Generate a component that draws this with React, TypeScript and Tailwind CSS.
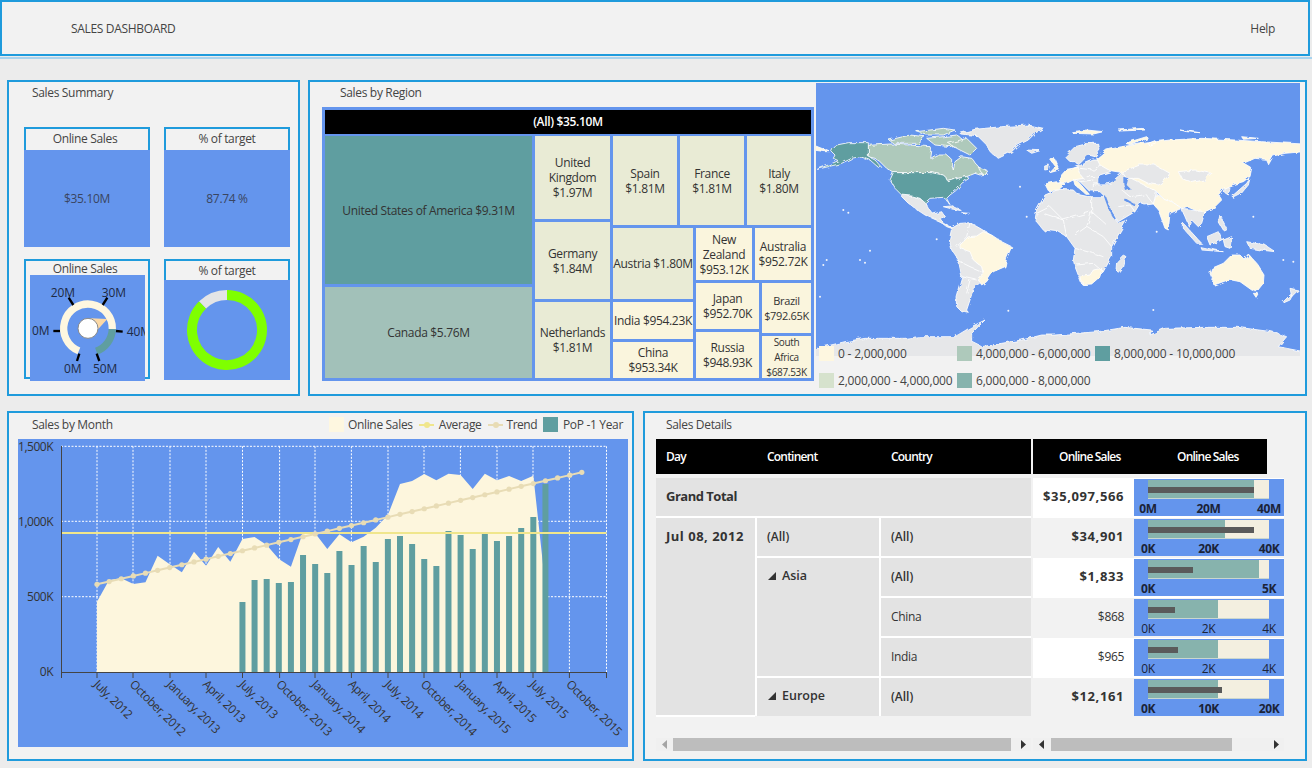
const BLUE = '#6495ed';
const TEAL = '#5f9ea0';
const CREAM = '#fef7e0';
const LAND = '#e6e7e9';

const areaTops = [590, 525, 520, 537, 532, 452, 478, 502, 440, 482, 426, 470, 402, 396, 420, 462, 485, 382, 385, 432, 388, 412, 395, 368, 330, 237, 228, 207, 226, 206, 210, 252, 206, 226, 213, 228, 212, 545];
const barTops = [591, 525, 522, 534, 531, 450, 477, 504, 438, 480, 423, 471, 402, 393, 417, 462, 483, 378, 390, 432, 387, 408, 393, 369, 336, 237];
const monthLabels = ['July, 2012', 'October, 2012', 'January, 2013', 'April, 2013', 'July, 2013', 'October, 2013', 'January, 2014', 'April, 2014', 'July, 2014', 'October, 2014', 'January, 2015', 'April, 2015', 'July, 2015', 'October, 2015'];
const gridXs = [97, 133, 170, 206, 242.5, 279.6, 315, 351.4, 388, 424, 460.4, 497, 533, 569.4, 606.5];

const monthX = (i: number) => 97 + 12.12 * i;
const pxY = (py: number) => 405 + py / 3;

function Panel({ title, titleClass, className, children }: { title?: string; titleClass?: string; className: string; children?: React.ReactNode }) {
  return (
    <section className={`border-2 border-[#1f9bdc] bg-[#f2f2f2] ${className}`}>
      {title && <h2 className={`text-[12px] font-normal leading-[16px] ${titleClass}`}>{title}</h2>}
      {children}
    </section>
  );
}

function KpiCard({ title, value, titleClass }: { title: string; value: string; titleClass?: string }) {
  return (
    <div className="w-[126px]">
      <div className={`flex h-[23px] items-center justify-center border-2 border-b-0 border-[#1f9bdc] pb-[2px] text-[12px] ${titleClass}`}>{title}</div>
      <div className="flex h-[97px] items-center justify-center bg-[#6495ed] text-[12px] text-[#3a4560]">{value}</div>
    </div>
  );
}

function Gauge() {
  const ticks = [
    { x1: 100, y1: 228, x2: 120, y2: 228 },
    { x1: 146, y1: 128, x2: 160, y2: 150 },
    { x1: 262, y1: 128, x2: 248, y2: 150 },
    { x1: 288, y1: 228, x2: 308, y2: 230 },
    { x1: 178, y1: 296, x2: 171, y2: 318 },
    { x1: 230, y1: 296, x2: 238, y2: 318 }
  ];
  return (
    <svg viewBox="30 60 345 318" className="h-[106px] w-[115px]">
      <path d="M176.7 287.7A73 73 0 1 1 277 222.5" fill="none" stroke={CREAM} strokeWidth="22" />
      <path d="M277 222.5A73 73 0 0 1 229 288.6" fill="none" stroke={TEAL} strokeWidth="22" />
      {ticks.map((t) => (
        <line key={t.x1} {...t} stroke="#000" strokeWidth="7" />
      ))}
      <polygon points="262,192 212,190 226,232" fill="#fcd9a6" />
      <circle cx="204" cy="220" r="30" fill="#fff" stroke="#8a8a8a" strokeWidth="3" />
      <g fontSize="36" fill="#1e2a44">
        <text x="36" y="241">0M</text>
        <text x="92" y="126">20M</text>
        <text x="245" y="126">30M</text>
        <text x="320" y="242">40M</text>
        <text x="132" y="353">0M</text>
        <text x="219" y="353">50M</text>
      </g>
    </svg>
  );
}

function Donut() {
  return (
    <svg viewBox="164 280 126 100" className="h-[100px] w-[126px]">
      <path d="M227 295A35 35 0 1 1 202.6 304.9" fill="none" stroke="#7fff00" strokeWidth="10" />
      <path d="M202.6 304.9A35 35 0 0 1 227 295" fill="none" stroke="#e3e4e6" strokeWidth="10" />
    </svg>
  );
}

function Cell({ className, children }: { className: string; children: React.ReactNode }) {
  return <div className={`flex items-center justify-center text-center leading-[15px] text-[#333] ${className}`}>{children}</div>;
}

function Treemap() {
  const big = 'bg-[#e9ebd5] text-[12px]';
  const small = 'bg-[#faf5dd] text-[12px]';
  return (
    <div className="ml-[12px] mt-[6px] flex h-[274px] w-[492px] flex-col gap-[2px] bg-[#6495ed] p-[3px]">
      <div className="flex h-[24px] items-center justify-center bg-black text-[12px] font-semibold text-white">(All) $35.10M</div>
      <div className="flex h-[242px] gap-[3px]">
        <div className="flex w-[207px] flex-col gap-[3px]">
          <Cell className="h-[148px] bg-[#5f9ea0] text-[12px]">United States of America $9.31M</Cell>
          <Cell className="h-[91px] bg-[#a2c1b9] text-[12px]">Canada $5.76M</Cell>
        </div>
        <div className="flex w-[75px] flex-col gap-[3px]">
          <Cell className={`h-[83px] ${big}`}>United<br />Kingdom<br />$1.97M</Cell>
          <Cell className={`h-[77px] ${big}`}>Germany<br />$1.84M</Cell>
          <Cell className={`h-[76px] ${big}`}>Netherlands<br />$1.81M</Cell>
        </div>
        <div className="flex w-[198px] flex-col gap-[3px]">
          <div className="flex h-[89px] gap-[3px]">
            <Cell className={`w-[64px] ${big}`}>Spain<br />$1.81M</Cell>
            <Cell className={`w-[64px] ${big}`}>France<br />$1.81M</Cell>
            <Cell className={`w-[64px] ${big}`}>Italy<br />$1.80M</Cell>
          </div>
          <div className="flex h-[150px] gap-[3px]">
            <div className="flex w-[80px] flex-col gap-[3px]">
              <Cell className={`h-[71px] whitespace-nowrap ${big}`}>Austria $1.80M</Cell>
              <Cell className={`h-[37px] whitespace-nowrap ${small}`}>India $954.23K</Cell>
              <Cell className={`h-[36px] ${small}`}>China<br />$953.34K</Cell>
            </div>
            <div className="flex w-[115px] flex-col gap-[3px]">
              <div className="flex h-[52px] gap-[3px]">
                <Cell className={`w-[56px] ${small}`}>New<br />Zealand<br />$953.12K</Cell>
                <Cell className={`w-[56px] ${small}`}>Australia<br />$952.72K</Cell>
              </div>
              <div className="flex h-[95px] gap-[3px]">
                <div className="flex w-[63px] flex-col gap-[3px]">
                  <Cell className={`h-[46px] ${small}`}>Japan<br />$952.70K</Cell>
                  <Cell className={`h-[46px] ${small}`}>Russia<br />$948.93K</Cell>
                </div>
                <div className="flex w-[49px] flex-col gap-[3px]">
                  <Cell className="h-[50px] bg-[#faf5dd] text-[11px]">Brazil<br />$792.65K</Cell>
                  <Cell className="h-[42px] bg-[#faf5dd] text-[10px] leading-[13px]">South<br />Africa<br />$687.53K</Cell>
                </div>
              </div>
            </div>
          </div>
        </div>
      </div>
    </div>
  );
}

const grayLand = [
  '450,160 495,148 575,140 655,135 700,145 675,160 655,180 625,195 605,215 575,230 565,235 545,220 525,190 505,170 455,165',
  '275,345 305,348 330,355 345,368 355,385 370,402 395,395 405,410 390,415 400,430 430,445 440,440 450,450 430,447 410,440 390,425 345,405 315,385 290,365 277,352',
  '400,380 425,378 455,392 430,388',
  '455,398 478,400 470,405',
  '418,480 425,445 450,430 480,428 510,445 535,460 560,480 540,560 520,600 490,625 480,660 470,690 478,700 455,695 440,680 438,650 455,590 445,540 425,510',
  '675,420 680,390 705,345 745,328 790,330 800,340 845,350 885,350 900,385 925,430 950,420 930,455 905,500 905,530 880,575 845,610 815,612 795,560 790,540 795,505 770,470 745,455 700,450',
  '940,525 948,530 940,565 928,580 918,570 920,545',
  '790,265 850,240 870,240 905,278 865,290 865,310 850,330 835,330 810,305 790,295',
  '765,230 795,200 835,190 865,190 870,210 855,230 835,225 815,245 805,255 795,245 780,245',
  '704,258 718,255 716,268 704,270',
  '650,210 690,212 665,220',
  '850,312 900,310 935,280 985,295 1015,310 1040,335 1030,372 1005,375 990,370 975,395 925,425 900,385 880,345 870,335 850,335',
  '1115,388 1160,392 1185,395 1175,430 1165,440 1145,420 1140,445 1125,410',
  '1120,430 1175,490 1160,490 1120,445',
  '1170,500 1240,515 1175,510',
  '1190,470 1225,455 1235,480 1200,495',
  '1240,480 1265,470 1260,505 1245,500',
  '1230,405 1250,445 1240,450 1225,425',
  '1310,485 1365,495 1395,515 1350,510 1320,505',
  '1245,315 1260,325 1255,345 1240,335',
  '1270,345 1310,310 1320,295 1315,315 1290,345 1270,355',
  '1420,665 1440,645 1450,640 1440,660 1422,668',
  '1440,625 1465,630 1445,650',
  '105,785 165,775 285,775 325,770 435,770 485,740 525,720 485,760 485,785 515,800 575,790 635,780 695,765 735,765 865,755 945,742 1025,750 1020,765 1065,745 1185,742 1285,742 1385,755 1430,770 1405,800 1480,815 1480,845 0,845 0,810'
];
const canadaLand = [
  '175,196 240,192 300,195 360,200 365,215 362,235 378,225 410,225 425,238 425,255 430,270 435,245 455,230 485,235 505,260 530,280 510,285 495,280 470,290 445,295 415,305 410,295 400,285 365,278 250,278 230,265 210,245 195,235 175,230',
  '237,180 300,165 345,170 320,190 250,190',
  '320,155 400,145 435,150 400,165 350,165',
  '350,175 400,170 440,165 460,180 420,200 375,195',
  '415,190 470,175 500,205 480,225 440,205',
  '505,262 530,270 520,285'
];
const usLand = [
  '250,278 365,278 400,285 410,295 415,305 445,295 470,290 477,295 455,310 440,330 420,345 410,355 420,375 410,360 400,352 360,355 345,368 330,355 305,348 275,345 255,325 240,300',
  '68,208 80,195 115,188 175,188 175,230 195,240 215,262 205,262 180,240 150,230 125,235 95,250 55,260 22,268 55,255 85,242 70,235 75,225 65,215'
];
const creamLand = [
  '860,235 890,210 935,200 1015,188 1080,180 1175,175 1275,180 1355,185 1480,192 1480,215 1425,220 1390,228 1375,255 1367,238 1335,235 1300,250 1325,265 1320,290 1300,305 1265,315 1240,325 1225,345 1235,360 1213,382 1185,395 1160,392 1135,382 1120,388 1085,365 1065,360 1040,335 935,280 905,275 870,255',
  '1040,340 1030,372 1045,390 1065,445 1075,450 1080,400 1115,385 1085,365 1065,360',
  '10,195 60,215 45,215 10,210',
  '450,495 475,470 500,468 520,455 545,465 575,485 605,500 590,535 585,560 550,575 530,605 515,615 505,600 520,585 515,560 490,540 480,515 450,505',
  '812,590 840,585 850,570 875,565 870,590 845,612 818,614',
  '1200,580 1205,565 1240,550 1265,525 1290,525 1305,540 1318,525 1340,550 1362,585 1360,610 1340,635 1325,630 1290,605 1265,600 1215,618',
  '1330,640 1345,640 1338,652',
  '705,312 740,305 765,312 745,330 715,332',
  '750,290 770,268 805,262 812,285 820,295 790,300 770,310 745,308',
  '790,298 805,305 835,340 825,340 795,315',
  '722,240 733,235 748,270 720,278 737,260',
  '785,155 830,150 880,155 850,162 790,160',
  '925,150 1000,145 1005,150 930,153',
  '945,190 1010,170 1015,175 965,195',
  '1015,190 1035,182 1040,192 1020,198',
  '1110,150 1170,158 1130,155',
  '1295,170 1345,175 1300,178'
];
const overlayLand = [
  '935,275 990,255 1035,255 1080,280 1065,300 1045,315 1015,310 985,295 950,295',
  '1105,275 1155,270 1205,280 1180,300 1145,308 1115,295'
];
const borders = [
  'M700 400L760 420L845 395M845 350V395L885 430M760 420L770 470M680 400L720 380L760 420',
  'M845 395L830 440L795 465M830 440L880 470L905 500M795 505L850 520L880 530M800 555L850 550L880 575',
  'M480 428L470 470L440 500M440 540L480 560L515 575M455 590L500 600M470 640L480 600',
  'M935 330L960 350L1000 345M925 380L960 375L975 395M1005 340L1030 372',
  'M810 265L850 270L870 255M830 290L865 290M810 305L850 300'
];
const islets = [[100, 390], [115, 398], [50, 540], [40, 555], [150, 540], [165, 548], [180, 512], [380, 478], [630, 320], [650, 410], [1330, 410], [1040, 455], [1420, 540], [1450, 545], [1030, 690], [595, 692], [30, 650]];

function WorldMap() {
  return (
    <svg viewBox="18 9 1452 819" className="mt-px h-[273px] w-[484px]">
      <defs>
        <filter id="coast" x="-5%" y="-5%" width="110%" height="110%">
          <feTurbulence type="fractalNoise" baseFrequency="0.045" numOctaves="3" seed="4" />
          <feDisplacementMap in="SourceGraphic" scale="14" />
        </filter>
      </defs>
      <rect x="18" y="9" width="1452" height="819" fill={BLUE} />
      <g filter="url(#coast)">
        <g stroke="#fff" strokeWidth="2.5" strokeLinejoin="round">
          {grayLand.map((p) => <polygon key={p} points={p} fill={LAND} />)}
          {canadaLand.map((p) => <polygon key={p} points={p} fill="#aec9bb" />)}
          {usLand.map((p) => <polygon key={p} points={p} fill={TEAL} />)}
          {creamLand.map((p) => <polygon key={p} points={p} fill={CREAM} />)}
          {overlayLand.map((p) => <polygon key={p} points={p} fill={LAND} />)}
        </g>
        <polygon points="865,295 905,290 920,300 895,310 865,310" fill={BLUE} />
        <polygon points="940,290 955,295 950,315 960,325 945,330 940,310" fill={BLUE} />
        <path d="M885 350L900 390L918 420M940 355L975 375" fill="none" stroke={BLUE} strokeWidth="6" />
        {borders.map((d) => <path key={d} d={d} fill="none" stroke="#fff" strokeWidth="2.5" />)}
      </g>
      {islets.map(([x, y]) => <circle key={`${x}-${y}`} cx={x} cy={y} r="3" fill="#f4f6fb" />)}
    </svg>
  );
}

const legendItems = [
  { color: 'bg-[#fef7e0]', label: '0 - 2,000,000' },
  { color: 'bg-[#aec9bb]', label: '4,000,000 - 6,000,000' },
  { color: 'bg-[#5f9ea0]', label: '8,000,000 - 10,000,000' },
  { color: 'bg-[#d6e2cd]', label: '2,000,000 - 4,000,000' },
  { color: 'bg-[#86b3ad]', label: '6,000,000 - 8,000,000' }
];

function SalesChart() {
  const area = `97,672.3 ${areaTops.map((t, i) => `${monthX(i)},${pxY(t)}`).join(' ')} ${monthX(37)},672.3`;
  const trend = Array.from({ length: 41 }, (_, i) => ({ x: monthX(i), y: pxY(538 - 8.4 * i) }));
  return (
    <svg viewBox="18 439 610 308" className="ml-[9px] mt-[4px] h-[308px] w-[610px]">
      <rect x="18" y="439" width="610" height="308" fill={BLUE} />
      <g stroke="#fff" strokeDasharray="2 1.5" strokeWidth="1">
        {[446.3, 521.3, 596.7].map((y) => <line key={y} x1="61" x2="606.5" y1={y} y2={y} />)}
        {gridXs.map((x) => <line key={x} x1={x} x2={x} y1="446.3" y2="672.3" />)}
      </g>
      <polygon points={area} fill="#fdf6dd" />
      {barTops.map((t, i) => (
        <rect key={i} x={monthX(i + 12) - 3} y={pxY(t)} width="6" height={672.3 - pxY(t)} fill={TEAL} />
      ))}
      <line x1="61" x2="606.5" y1="533" y2="533" stroke="#f0e68c" strokeWidth="2" />
      <polyline points={trend.map((p) => `${p.x},${p.y}`).join(' ')} fill="none" stroke="#e8dcb5" strokeWidth="2" />
      {trend.map((p) => <circle key={p.x} cx={p.x} cy={p.y} r="2.6" fill="#e8dcb5" />)}
      <path d="M61.5 446V672.5H606.5" fill="none" stroke="#444" strokeWidth="1" />
      {[61.5, ...gridXs].map((x) => <line key={x} x1={x} x2={x} y1="672" y2="678" stroke="#444" />)}
      <g fontSize="12" fill="#333" textAnchor="end" letterSpacing="-0.5">
        <text x="53" y="451">1,500K</text>
        <text x="53" y="526">1,000K</text>
        <text x="53" y="601">500K</text>
        <text x="53" y="676">0K</text>
      </g>
      <g fontSize="12" fill="#333" letterSpacing="-0.5">
        {monthLabels.map((m, i) => (
          <text key={m} x={gridXs[i] - 4} y="685" transform={`rotate(45 ${gridXs[i] - 4} 685)`}>{m}</text>
        ))}
      </g>
    </svg>
  );
}

function LineKey({ color }: { color: string }) {
  return (
    <span className="relative h-[2px] w-[15px] bg-current" style={{ color }}>
      <span className="absolute left-[5px] top-[-2px] size-[6px] rounded-full bg-current" />
    </span>
  );
}

type Bullet = { band: number; bar: number; labels: string[]; bold: boolean };

const rows: { value: string; bold: boolean; bg: string; bullet: Bullet }[] = [
  { value: '$35,097,566', bold: true, bg: 'bg-white', bullet: { band: 106, bar: 106, labels: ['0M', '20M', '40M'], bold: true } },
  { value: '$34,901', bold: true, bg: 'bg-[#f2f2f2]', bullet: { band: 77, bar: 106, labels: ['0K', '20K', '40K'], bold: true } },
  { value: '$1,833', bold: true, bg: 'bg-white', bullet: { band: 111, bar: 45, labels: ['0K', '5K'], bold: true } },
  { value: '$868', bold: false, bg: 'bg-[#f2f2f2]', bullet: { band: 70, bar: 27, labels: ['0K', '2K', '4K'], bold: false } },
  { value: '$965', bold: false, bg: 'bg-white', bullet: { band: 70, bar: 30, labels: ['0K', '2K', '4K'], bold: false } },
  { value: '$12,161', bold: true, bg: 'bg-[#f2f2f2]', bullet: { band: 70, bar: 74, labels: ['0K', '10K', '20K'], bold: true } }
];

function BulletCell({ band, bar, labels, bold }: Bullet) {
  return (
    <div className="mt-px h-[37px] w-[150px] bg-[#6495ed] px-[14px] pt-px">
      <div className="relative h-[19px] w-[121px] border-b border-[#c9d6d0] bg-[#f3efe0]">
        <div className="h-[18px] bg-[#87b3ad]" style={{ width: band }} />
        <div className="absolute left-0 top-[7px] h-[6px] bg-[#5a5a5a]" style={{ width: bar }} />
      </div>
      <div className={`mt-[3px] flex w-[121px] justify-between text-[12px] leading-[13px] text-[#1b2338] ${bold ? 'font-bold' : ''}`}>
        {labels.map((l) => (
          <span key={l} className="flex w-0 justify-center whitespace-nowrap">{l}</span>
        ))}
      </div>
    </div>
  );
}

function Arrow({ left, className }: { left: boolean; className: string }) {
  return (
    <svg viewBox="0 0 5 9" className={`h-[9px] w-[5px] ${className}`}>
      <polygon points={left ? '5,0 0,4.5 5,9' : '0,0 5,4.5 0,9'} fill="currentColor" />
    </svg>
  );
}

function Triangle() {
  return (
    <svg viewBox="0 0 8 8" className="h-[8px] w-[8px] shrink-0">
      <polygon points="8,0 8,8 0,8" fill="#333" />
    </svg>
  );
}

function DetailsTable() {
  const cell = 'flex items-center bg-[#e3e3e3] pl-[10px] text-[12px] text-[#333]';
  const medium = 'text-[12.5px] font-semibold tracking-normal';
  const group = 'bg-[#e3e3e3] pl-[11px] pt-[9px] text-[#333]';
  return (
    <div className="ml-[11px] mt-[4px]">
      <div className="flex gap-[2px] text-[12px] font-semibold tracking-[-0.8px] text-white">
        <div className="flex h-[35px] w-[375px] items-center bg-black">
          <span className="ml-[10px] w-[101px]">Day</span>
          <span className="w-[124px]">Continent</span>
          <span>Country</span>
        </div>
        <div className="flex h-[35px] w-[234px] items-center bg-black">
          <span className="ml-[26px] w-[118px]">Online Sales</span>
          <span>Online Sales</span>
        </div>
      </div>
      <div className="mt-[4px] flex gap-[2px]">
        <div className="grid w-[375px] grid-cols-[99px_122px_150px] grid-rows-[repeat(6,38px)] gap-[2px] self-start bg-white">
          <div className={`col-span-3 ${cell} text-[13px] font-bold tracking-[-0.5px]`}>Grand Total</div>
          <div className="row-span-5 mb-[-1px] border-b-2 border-white bg-[#e3e3e3] pl-[10px] pt-[9px] text-[13px] font-bold tracking-[0.5px] text-[#333]">Jul 08, 2012</div>
          <div className={`${cell} ${medium}`}>(All)</div>
          <div className={`${cell} ${medium}`}>(All)</div>
          <div className={`row-span-3 ${group} ${medium}`}>
            <div className="flex items-center gap-[6px]"><Triangle />Asia</div>
          </div>
          <div className={`${cell} ${medium}`}>(All)</div>
          <div className={cell}>China</div>
          <div className={cell}>India</div>
          <div className={`${group} ${medium}`}>
            <div className="flex items-center gap-[6px]"><Triangle />Europe</div>
          </div>
          <div className={`${cell} ${medium}`}>(All)</div>
        </div>
        <div className="w-[251px]">
          {rows.map((r) => (
            <div key={r.value} className={`flex h-[40px] last:h-[38px] ${r.bg}`}>
              <div className={`flex h-[38px] w-[101px] items-center justify-end pr-[10px] text-[12px] text-[#333] ${r.bold ? 'text-[13px] font-bold tracking-[0.6px]' : ''}`}>{r.value}</div>
              <BulletCell {...r.bullet} />
            </div>
          ))}
        </div>
      </div>
      <div className="mt-[22px] flex gap-[2px]">
        <div className="flex h-[13px] w-[375px] items-center bg-[#f0f0f0]">
          <Arrow left className="ml-[6px] text-[#a5a5a5]" />
          <div className="ml-[6px] h-[13px] w-[338px] bg-[#bdbdbd]" />
          <Arrow left={false} className="ml-[10px] text-[#333]" />
        </div>
        <div className="flex h-[13px] w-[251px] items-center bg-[#f0f0f0]">
          <Arrow left className="ml-[6px] text-[#333]" />
          <div className="ml-[7px] h-[13px] w-[181px] bg-[#bdbdbd]" />
          <Arrow left={false} className="ml-[42px] text-[#333]" />
        </div>
      </div>
    </div>
  );
}

export default function App() {
  return (
    <div className="h-[768px] w-[1312px] overflow-hidden bg-[#ececec] font-['Open_Sans','Liberation_Sans',sans-serif] tracking-[-0.33px] text-[#444]">
      <header className="flex h-[56px] w-[1310px] items-center justify-between border-2 border-[#1f9bdc] bg-[#f2f2f2] pl-[69px] pr-[33px] pt-px text-[12px]">
        <span>SALES DASHBOARD</span>
        <span>Help</span>
      </header>
      <div className="mt-px h-[2px] bg-[#a8d3ee]" />
      <div className="ml-[7px] mt-[21px] flex gap-[8px]">
        <Panel title="Sales Summary" titleClass="pl-[23px] pt-[3px]" className="h-[316px] w-[293px]">
          <div className="ml-[15px] mt-[26px] grid w-[266px] grid-cols-2 gap-x-[14px] gap-y-[12px]">
            <KpiCard title="Online Sales" value="$35.10M" titleClass="pr-[4px]" />
            <KpiCard title="% of target" value="87.74 %" />
            <div className="h-[120px] w-[126px] border-2 border-[#1f9bdc]">
              <div className="h-[14px] pr-[4px] text-center text-[12px] leading-[16px]">Online Sales</div>
              <div className="ml-[4px] h-[106px] w-[115px] bg-[#6495ed]"><Gauge /></div>
            </div>
            <div className="w-[126px]">
              <div className="flex h-[21px] items-center justify-center border-2 border-b-0 border-[#1f9bdc] text-[12px]">% of target</div>
              <div className="h-[100px] bg-[#6495ed]"><Donut /></div>
            </div>
          </div>
        </Panel>
        <Panel className="flex h-[316px] w-[999px]">
          <div className="w-[506px]">
            <h2 className="pl-[30px] pt-[3px] text-[12px] font-normal leading-[16px]">Sales by Region</h2>
            <Treemap />
          </div>
          <div>
            <WorldMap />
            <div className="relative ml-[3px] -mt-[10px] grid w-[440px] grid-cols-[138px_138px_164px] gap-y-[12px] tracking-[-0.2px]">
              {legendItems.map((l) => (
                <div key={l.label} className="flex h-[15px] items-center gap-[4px] whitespace-nowrap text-[12px]">
                  <span className={`size-[15px] shrink-0 ${l.color}`} />
                  {l.label}
                </div>
              ))}
            </div>
          </div>
        </Panel>
      </div>
      <div className="ml-[7px] mt-[15px] flex gap-[9px]">
        <Panel className="h-[350px] w-[627px]">
          <div className="flex h-[22px] items-center justify-between pr-[9px] pt-px text-[12px]">
            <span className="pl-[23px] leading-[16px]">Sales by Month</span>
            <div className="flex items-center">
              <span className="size-[15px] bg-[#fef7e0]" />
              <span className="ml-[4px] mr-[6px]">Online Sales</span>
              <LineKey color="#f0e68c" />
              <span className="ml-[5px] mr-[6px]">Average</span>
              <LineKey color="#e8dcb5" />
              <span className="ml-[4px] mr-[6px] tracking-[-0.5px]">Trend</span>
              <span className="size-[15px] bg-[#5f9ea0]" />
              <span className="ml-[5px]">PoP -1 Year</span>
            </div>
          </div>
          <SalesChart />
        </Panel>
        <Panel title="Sales Details" titleClass="pl-[21px] pt-[4px] h-[22px]" className="h-[350px] w-[664px]">
          <DetailsTable />
        </Panel>
      </div>
    </div>
  );
}
